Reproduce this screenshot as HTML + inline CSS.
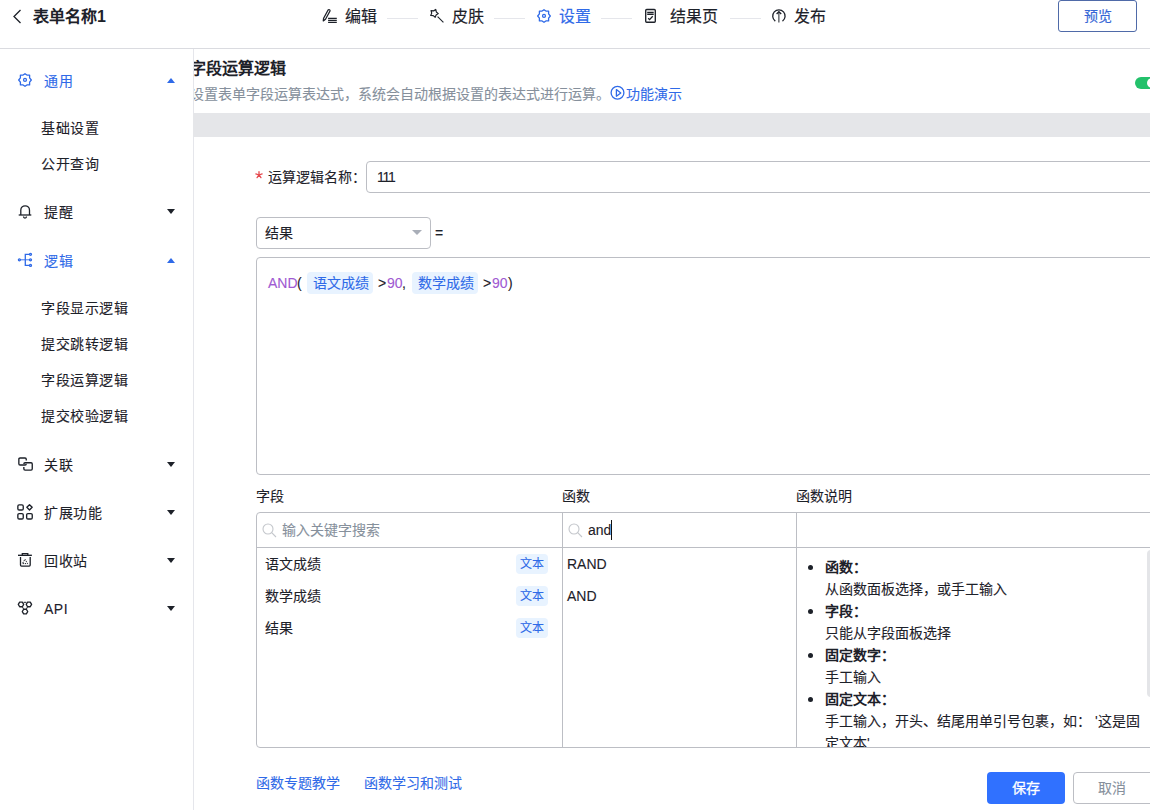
<!DOCTYPE html>
<html lang="zh-CN"><head><meta charset="utf-8">
<style>
*{box-sizing:border-box;margin:0;padding:0}
html,body{width:1150px;height:810px;overflow:hidden;background:#fff}
body{position:relative;font-family:"Liberation Sans",sans-serif;color:#1d2129;font-size:14px;-webkit-text-stroke:0.1px currentColor}
.a{position:absolute;white-space:nowrap}
.t14{font-size:14px;line-height:20px}
.t16{font-size:16px;line-height:22px}
.blue{color:#2f6ae8}
#hdr{-webkit-text-stroke:0.15px currentColor;position:absolute;left:0;top:0;width:1150px;height:49px;border-bottom:1px solid #dadbe0;background:#fff}
#side{position:absolute;left:0;top:49px;width:194px;height:761px;border-right:1px solid #e5e6eb;background:#fff;z-index:5;letter-spacing:0.5px}
.step-line{position:absolute;top:18px;height:1px;width:31px;background:#e5e6eb}
.caret{position:absolute;width:0;height:0;border-left:4.5px solid transparent;border-right:4.5px solid transparent}
.cd{border-top:5px solid #1d2129}
.cu{border-bottom:5px solid #2f6ae8}
.li{position:relative;padding-left:28px}
.li::before{content:"";position:absolute;left:11px;top:9px;width:5px;height:5px;border-radius:50%;background:#1d2129}
.li2{padding-left:28px}
b,.bold{-webkit-text-stroke:0}
</style></head><body>

<div id="hdr">
  <!-- back arrow -->
  <svg class="a" style="left:12px;top:9px" width="10" height="15" viewBox="0 0 10 15"><path d="M8.5 1 L2 7.5 L8.5 14" fill="none" stroke="#1d2129" stroke-width="1.3"/></svg>
  <div class="a t16" style="left:33px;top:6px;font-weight:bold;-webkit-text-stroke:0">表单名称1</div>

  <!-- steps -->
  <svg class="a" style="left:320px;top:6px" width="18" height="18" viewBox="0 0 18 18"><path d="M3.3 14.9 L3.6 12.2 L8.1 4.0 A1.1 1.1 0 0 1 10.0 5.0 L5.5 13.3 Z" fill="none" stroke="#1d2129" stroke-width="1.3" stroke-linejoin="round"/><path d="M8.1 12.4 H16.8 M8.1 14.4 H16.8 M8.1 16.4 H16.8" stroke="#1d2129" stroke-width="1.3"/></svg>
  <div class="a t16" style="left:345px;top:6px">编辑</div>
  <div class="step-line" style="left:387px"></div>

  <svg class="a" style="left:427px;top:6px" width="18" height="18" viewBox="0 0 18 18"><path d="M4.06 4.66 L6.60 4.87 L8.74 3.50 L9.32 5.98 L11.29 7.59 L9.12 8.91 L8.19 11.28 L6.26 9.62 L3.72 9.47 L4.71 7.13 Z" fill="none" stroke="#1d2129" stroke-width="1.2" stroke-linejoin="round"/><path d="M10.6 10.6 L16.4 16.4" stroke="#1d2129" stroke-width="1.1"/></svg>
  <div class="a t16" style="left:452px;top:6px">皮肤</div>
  <div class="step-line" style="left:494px"></div>

  <svg class="a" style="left:537px;top:9px" width="14" height="14" viewBox="0 0 14 14"><path d="M7 0.7 L5.1 2.1 L2.4 2.1 L2.4 4.8 L0.7 7 L2.4 9.2 L2.4 11.9 L5.1 11.9 L7 13.3 L8.9 11.9 L11.6 11.9 L11.6 9.2 L13.3 7 L11.6 4.8 L11.6 2.1 L8.9 2.1 Z" fill="none" stroke="#2f6ae8" stroke-width="1.3" stroke-linejoin="round"/><circle cx="7" cy="6.9" r="1.45" fill="none" stroke="#2f6ae8" stroke-width="1.3"/></svg>
  <div class="a t16 blue" style="left:559px;top:6px">设置</div>
  <div class="step-line" style="left:601px"></div>

  <svg class="a" style="left:644px;top:8px" width="13" height="16" viewBox="0 0 13 16"><rect x="1.7" y="1.5" width="9.6" height="12.7" rx="1" fill="none" stroke="#1d2129" stroke-width="1.35"/><path d="M3.2 4.5 H9.7 M3.2 6.4 H9.7" stroke="#1d2129" stroke-width="1.3"/><path d="M4.2 10.2 L5.6 11.6 L8.7 8.3" fill="none" stroke="#1d2129" stroke-width="1.3"/></svg>
  <div class="a t16" style="left:670px;top:6px">结果页</div>
  <div class="step-line" style="left:730px"></div>

  <svg class="a" style="left:771px;top:8px" width="16" height="16" viewBox="0 0 16 16"><path d="M4.3 13.1 A6.2 6.2 0 1 1 11.5 13.1" fill="none" stroke="#1d2129" stroke-width="1.3"/><path d="M7.9 4.2 V14.5" stroke="#1d2129" stroke-width="1.0"/><path d="M5.6 6 L7.9 3.7 L10.2 6" fill="none" stroke="#1d2129" stroke-width="1.35"/></svg>
  <div class="a t16" style="left:794px;top:6px">发布</div>

  <div class="a" style="left:1058px;top:0px;width:79px;height:32px;border:1px solid #4f6aa8;border-radius:3px;color:#3566d6;font-size:14px;line-height:30px;text-align:center">预览</div>
</div>

<div id="side">
  <!-- 通用 -->
  <svg class="a" style="left:18px;top:24px" width="14" height="14" viewBox="0 0 14 14"><path d="M7 0.7 L5.1 2.1 L2.4 2.1 L2.4 4.8 L0.7 7 L2.4 9.2 L2.4 11.9 L5.1 11.9 L7 13.3 L8.9 11.9 L11.6 11.9 L11.6 9.2 L13.3 7 L11.6 4.8 L11.6 2.1 L8.9 2.1 Z" fill="none" stroke="#2f6ae8" stroke-width="1.3" stroke-linejoin="round"/><circle cx="7" cy="6.9" r="1.45" fill="none" stroke="#2f6ae8" stroke-width="1.3"/></svg>
  <div class="a t14 blue" style="left:44px;top:22px">通用</div>
  <div class="caret cu" style="left:167px;top:29px"></div>
  <div class="a t14" style="left:41px;top:69px">基础设置</div>
  <div class="a t14" style="left:41px;top:105px">公开查询</div>

  <!-- 提醒 -->
  <svg class="a" style="left:18px;top:156px" width="14" height="14" viewBox="0 0 14 14"><path d="M2.8 10 V5.15 a4.35 4.35 0 0 1 8.7 0 V10" fill="none" stroke="#1d2129" stroke-width="1.3"/><path d="M0.7 10 H13.3" stroke="#1d2129" stroke-width="1.3"/><path d="M5.5 11.6 a1.5 1.5 0 0 0 3 0" fill="none" stroke="#1d2129" stroke-width="1.3"/></svg>
  <div class="a t14" style="left:44px;top:153px">提醒</div>
  <div class="caret cd" style="left:167px;top:160px"></div>

  <!-- 逻辑 -->
  <svg class="a" style="left:17px;top:203px" width="16" height="16" viewBox="0 0 16 16"><circle cx="2.4" cy="7.8" r="1.0" fill="none" stroke="#2f6ae8" stroke-width="1.3"/><circle cx="13.5" cy="2.3" r="1.0" fill="none" stroke="#2f6ae8" stroke-width="1.3"/><circle cx="13.5" cy="7.8" r="1.0" fill="none" stroke="#2f6ae8" stroke-width="1.3"/><circle cx="13.5" cy="13.4" r="1.0" fill="none" stroke="#2f6ae8" stroke-width="1.3"/><path d="M3.4 7.8 H12.5" stroke="#2f6ae8" stroke-width="0.9"/><path d="M12.5 2.3 H8.3 V13.4 H12.5" fill="none" stroke="#2f6ae8" stroke-width="1.3"/></svg>
  <div class="a t14 blue" style="left:44px;top:202px">逻辑</div>
  <div class="caret cu" style="left:167px;top:209px"></div>
  <div class="a t14" style="left:41px;top:249px">字段显示逻辑</div>
  <div class="a t14" style="left:41px;top:285px">提交跳转逻辑</div>
  <div class="a t14" style="left:41px;top:321px">字段运算逻辑</div>
  <div class="a t14" style="left:41px;top:357px">提交校验逻辑</div>

  <!-- 关联 -->
  <svg class="a" style="left:17px;top:407px" width="16" height="16" viewBox="0 0 16 16"><path d="M9.25 4.4 V3.15 a1.2 1.2 0 0 0 -1.2 -1.2 H3.05 a1.2 1.2 0 0 0 -1.2 1.2 V7.8 a1.2 1.2 0 0 0 1.2 1.2 H8.05 a1.2 1.2 0 0 0 1.2 -1.2 V7.9" fill="none" stroke="#1d2129" stroke-width="1.35"/><path d="M6.85 8.1 V7.95 a1.2 1.2 0 0 1 1.2 -1.2 H14.05 a1.2 1.2 0 0 1 1.2 1.2 V12.85 a1.2 1.2 0 0 1 -1.2 1.2 H8.05 a1.2 1.2 0 0 1 -1.2 -1.2 V10.9" fill="none" stroke="#1d2129" stroke-width="1.35"/></svg>
  <div class="a t14" style="left:44px;top:406px">关联</div>
  <div class="caret cd" style="left:167px;top:413px"></div>

  <!-- 扩展功能 -->
  <svg class="a" style="left:16px;top:454px" width="17" height="17" viewBox="0 0 17 17"><rect x="1.85" y="1.85" width="5.4" height="5.15" rx="1.3" fill="none" stroke="#1d2129" stroke-width="1.35"/><rect x="1.85" y="10.55" width="5.4" height="5.4" rx="1.3" fill="none" stroke="#1d2129" stroke-width="1.35"/><rect x="10.65" y="10.55" width="5.6" height="5.4" rx="1.3" fill="none" stroke="#1d2129" stroke-width="1.35"/><path d="M13.5 1.65 L16.15 4.3 L13.5 6.95 L10.85 4.3 Z" fill="none" stroke="#1d2129" stroke-width="1.35" stroke-linejoin="round"/></svg>
  <div class="a t14" style="left:44px;top:454px">扩展功能</div>
  <div class="caret cd" style="left:167px;top:461px"></div>

  <!-- 回收站 -->
  <svg class="a" style="left:17px;top:503px" width="16" height="16" viewBox="0 0 16 16"><path d="M1 3.3 H14.9" stroke="#1d2129" stroke-width="1.35"/><path d="M5.3 3.3 V1.7 H10.8 V3.3" fill="none" stroke="#1d2129" stroke-width="1.3"/><path d="M3.5 5.1 V13.1 a1 1 0 0 0 1 1 H12.2 a1 1 0 0 0 1 -1 V5.1" fill="none" stroke="#1d2129" stroke-width="1.3"/><path d="M8 7.2 L10.6 11.6 H5.4 Z" fill="none" stroke="#1d2129" stroke-width="1.0" stroke-dasharray="1.3 0.9"/></svg>
  <div class="a t14" style="left:44px;top:502px">回收站</div>
  <div class="caret cd" style="left:167px;top:509px"></div>

  <!-- API -->
  <svg class="a" style="left:17px;top:551px" width="16" height="16" viewBox="0 0 16 16"><path d="M6.70 4.40 L5.35 6.74 L2.65 6.74 L1.30 4.40 L2.65 2.06 L5.35 2.06 Z M14.60 4.40 L13.25 6.74 L10.55 6.74 L9.20 4.40 L10.55 2.06 L13.25 2.06 Z M10.70 11.60 L9.35 13.94 L6.65 13.94 L5.30 11.60 L6.65 9.26 L9.35 9.26 Z" fill="none" stroke="#1d2129" stroke-width="1.3" stroke-linejoin="round"/><path d="M6.7 2.3 H9.2 M5.4 6.8 L6.6 9.2 M10.5 6.8 L9.4 9.2" stroke="#1d2129" stroke-width="1.0"/></svg>
  <div class="a t14" style="left:44px;top:550px">API</div>
  <div class="caret cd" style="left:167px;top:557px"></div>
</div>

<div id="main">
  <div class="a t16" style="left:190px;top:58px;font-weight:bold;-webkit-text-stroke:0">字段运算逻辑</div>
  <div class="a t14" style="left:190px;top:84px;color:#86909c">设置表单字段运算表达式，系统会自动根据设置的表达式进行运算。</div>
  <svg class="a" style="left:610px;top:85px" width="15" height="15" viewBox="0 0 15 15"><circle cx="7.5" cy="7.8" r="6.4" fill="none" stroke="#2f6ae8" stroke-width="1.3"/><path d="M6.4 4.6 L10.8 7.9 L6.4 11.2 Z" fill="none" stroke="#2f6ae8" stroke-width="1.3" stroke-linejoin="round"/></svg>
  <div class="a t14 blue" style="left:626px;top:84px">功能演示</div>
  <div class="a" style="left:1135px;top:77px;width:28px;height:12px;border-radius:6px;background:#23c16b"></div>
  <div class="a" style="left:1147px;top:78px;width:10px;height:10px;border-radius:5px;background:#fff"></div>

  <div class="a" style="left:193px;top:113px;width:957px;height:24px;background:#e5e6e9;z-index:6"></div>

  <svg class="a" style="left:255px;top:171px" width="8" height="8" viewBox="0 0 8 8"><path d="M4 4 L4.00 0.70 M4 4 L7.14 2.98 M4 4 L5.94 6.67 M4 4 L2.06 6.67 M4 4 L0.86 2.98" stroke="#e5484d" stroke-width="1.3" stroke-linecap="round"/></svg>
  <div class="a t14" style="left:268px;top:167px">运算逻辑名称：</div>
  <div class="a" style="left:366px;top:161px;width:900px;height:32px;border:1px solid #bcbec4;border-radius:4px"></div>
  <div class="a t14" style="left:377px;top:167px;letter-spacing:-1.2px">111</div>

  <div class="a" style="left:256px;top:217px;width:175px;height:32px;border:1px solid #bcbec4;border-radius:4px"></div>
  <div class="a t14" style="left:265px;top:223px">结果</div>
  <div class="caret" style="left:412px;top:230px;border-left:5px solid transparent;border-right:5px solid transparent;border-top:5.5px solid #a9aeb8"></div>
  <div class="a t14" style="left:435px;top:223px">=</div>

  <div class="a" style="left:256px;top:257px;width:900px;height:218px;border:1px solid #bcbec4;border-radius:4px"></div>
  <div class="a t14" style="left:268px;top:273px;color:#a05ad2">AND</div>
  <div class="a t14" style="left:297px;top:273px">(</div>
  <div class="a" style="left:307px;top:272px;width:66px;height:22px;border-radius:4px;background:#e8f3ff"></div>
  <div class="a t14" style="left:313px;top:273px;color:#2f6ae8">语文成绩</div>
  <div class="a t14" style="left:378px;top:273px">&gt;</div>
  <div class="a t14" style="left:387px;top:273px;color:#a05ad2">90</div>
  <div class="a t14" style="left:402px;top:273px">,</div>
  <div class="a" style="left:412px;top:272px;width:66px;height:22px;border-radius:4px;background:#e8f3ff"></div>
  <div class="a t14" style="left:418px;top:273px;color:#2f6ae8">数学成绩</div>
  <div class="a t14" style="left:483px;top:273px">&gt;</div>
  <div class="a t14" style="left:492px;top:273px;color:#a05ad2">90</div>
  <div class="a t14" style="left:508px;top:273px">)</div>

  <div class="a t14" style="left:256px;top:486px">字段</div>
  <div class="a t14" style="left:562px;top:486px">函数</div>
  <div class="a t14" style="left:796px;top:486px">函数说明</div>

  <div class="a" style="left:256px;top:512px;width:900px;height:236px;border:1px solid #bcbec4;border-radius:4px"></div>
  <div class="a" style="left:257px;top:547px;width:893px;height:1px;background:#bcbec4"></div>
  <div class="a" style="left:562px;top:513px;width:1px;height:234px;background:#bcbec4"></div>
  <div class="a" style="left:796px;top:513px;width:1px;height:234px;background:#bcbec4"></div>

  <svg class="a" style="left:262px;top:523px" width="15" height="15" viewBox="0 0 15 15"><circle cx="6" cy="6" r="5" fill="none" stroke="#c4c7cc" stroke-width="1.1"/><path d="M9.7 9.7 L14 14" stroke="#c4c7cc" stroke-width="1.1"/></svg>
  <div class="a t14" style="left:282px;top:520px;color:#86909c">输入关键字搜索</div>
  <svg class="a" style="left:568px;top:523px" width="15" height="15" viewBox="0 0 15 15"><circle cx="6" cy="6" r="5" fill="none" stroke="#c4c7cc" stroke-width="1.1"/><path d="M9.7 9.7 L14 14" stroke="#c4c7cc" stroke-width="1.1"/></svg>
  <div class="a t14" style="left:588px;top:520px">and</div>
  <div class="a" style="left:611px;top:520px;width:1px;height:20px;background:#111"></div>

  <div class="a t14" style="left:265px;top:554px">语文成绩</div>
  <div class="a t14" style="left:265px;top:586px">数学成绩</div>
  <div class="a t14" style="left:265px;top:618px">结果</div>
  <div class="a" style="left:516px;top:554px;width:32px;height:20px;border-radius:4px;background:#e8f3ff;color:#2f6ae8;font-size:12px;line-height:20px;text-align:center">文本</div>
  <div class="a" style="left:516px;top:586px;width:32px;height:20px;border-radius:4px;background:#e8f3ff;color:#2f6ae8;font-size:12px;line-height:20px;text-align:center">文本</div>
  <div class="a" style="left:516px;top:618px;width:32px;height:20px;border-radius:4px;background:#e8f3ff;color:#2f6ae8;font-size:12px;line-height:20px;text-align:center">文本</div>

  <div class="a t14" style="left:567px;top:554px">RAND</div>
  <div class="a t14" style="left:567px;top:586px">AND</div>

  <div class="a" style="left:797px;top:548px;width:353px;height:199px;overflow:hidden">
    <div style="position:absolute;left:0;top:8px;width:360px;font-size:14px;line-height:22px;white-space:nowrap">
      <div class="li"><b>函数：</b></div>
      <div class="li2">从函数面板选择，或手工输入</div>
      <div class="li"><b>字段：</b></div>
      <div class="li2">只能从字段面板选择</div>
      <div class="li"><b>固定数字：</b></div>
      <div class="li2">手工输入</div>
      <div class="li"><b>固定文本：</b></div>
      <div class="li2">手工输入，开头、结尾用单引号包裹，如： '这是固</div>
      <div class="li2">定文本'</div>
    </div>
  </div>

  <div class="a" style="left:1147px;top:550px;width:10px;height:147px;border-radius:4px;background:#e4e5e8"></div>
  <div class="a t14 blue" style="left:256px;top:773px">函数专题教学</div>
  <div class="a t14 blue" style="left:364px;top:773px">函数学习和测试</div>
  <div class="a" style="left:987px;top:772px;width:78px;height:32px;border-radius:4px;background:#3071ff;color:#fff;font-size:14px;line-height:32px;text-align:center;-webkit-text-stroke:0.3px #fff">保存</div>
  <div class="a" style="left:1073px;top:772px;width:100px;height:32px;border-radius:4px;border:1px solid #bcbec4;color:#86909c;font-size:14px;line-height:30px;padding-left:24px">取消</div>
</div>

</body></html>
